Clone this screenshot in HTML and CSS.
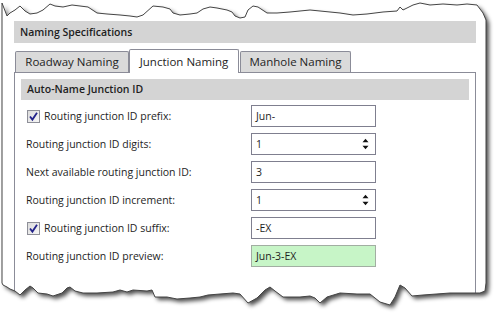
FILE: index.html
```html
<!DOCTYPE html>
<html>
<head>
<meta charset="utf-8">
<link rel="stylesheet" href="styles.css">
</head>
<body>
<div class="page">
  <div class="dialog">
    <div class="section-head">Naming Specifications</div>
    <div class="tabs">
      <div class="tab tab-road">Roadway Naming</div>
      <div class="tab tab-junc">Junction Naming</div>
      <div class="tab tab-man">Manhole Naming</div>
    </div>
    <div class="panel">
      <div class="group-head">Auto-Name Junction ID</div>
      <div class="rows">
        <div class="row">
          <label class="lbl"><span class="cb"><svg viewBox="0 0 13 13" width="13" height="13"><path d="M3 6.5 L5.4 9.6 L10 2.8" class="check"/></svg></span>Routing junction ID prefix:</label>
          <div class="field">Jun-</div>
        </div>
        <div class="row">
          <label class="lbl">Routing junction ID digits:</label>
          <div class="field"><span>1</span><svg class="spin" viewBox="0 0 7 12" width="7" height="12"><path d="M0.5 4.2 L3.5 0.8 L6.5 4.2 Z M0.5 7.8 L6.5 7.8 L3.5 11.2 Z"/></svg></div>
        </div>
        <div class="row">
          <label class="lbl">Next available routing junction ID:</label>
          <div class="field">3</div>
        </div>
        <div class="row">
          <label class="lbl">Routing junction ID increment:</label>
          <div class="field"><span>1</span><svg class="spin" viewBox="0 0 7 12" width="7" height="12"><path d="M0.5 4.2 L3.5 0.8 L6.5 4.2 Z M0.5 7.8 L6.5 7.8 L3.5 11.2 Z"/></svg></div>
        </div>
        <div class="row">
          <label class="lbl"><span class="cb"><svg viewBox="0 0 13 13" width="13" height="13"><path d="M3 6.5 L5.4 9.6 L10 2.8" class="check"/></svg></span>Routing junction ID suffix:</label>
          <div class="field">-EX</div>
        </div>
        <div class="row">
          <label class="lbl">Routing junction ID preview:</label>
          <div class="field preview">Jun-3-EX</div>
        </div>
      </div>
    </div>
  </div>
  <svg class="tear" viewBox="0 0 496 315" width="496" height="315">
    <defs>
      <path id="paper" d="M2,3 L7,16 L10,13 L15,10 L20,6 L25,11 L30,14 L37,13 L43,10 L50,4 L55,6 L63,7 L72,5 L80,6 L88,7 L97,13 L107,14 L120,15 L130,16 L137,17 L143,15 L153,6 L163,7 L170,9 L173,13 L180,15 L190,14 L197,13 L203,9 L210,7 L217,8 L227,10 L232,12 L235,16 L240,18 L245,17 L248,10 L253,6 L258,7 L267,13 L277,13 L290,12 L300,11 L310,10 L320,11 L330,12 L340,13 L353,15 L367,14 L383,12 L397,11 L400,7 L403,10 L413,5 L420,3 L430,5 L443,4 L457,5 L467,4 L477,5 L483,13 L486,20 L486,283 L485,291 L480,293 L450,293 L423,295 L412,296 L405,288 L400,285 L395,297 L390,305 L380,302 L370,294 L357,294 L340,293 L327,297 L320,303 L315,298 L310,296 L300,297 L283,297 L275,291 L270,287 L265,290 L257,298 L248,303 L240,294 L233,293 L220,294 L208,295 L200,297 L190,298 L177,299 L167,297 L155,297 L152,290 L147,291 L133,290 L127,292 L120,290 L113,292 L97,293 L83,293 L75,291 L70,287 L67,288 L62,293 L53,296 L47,294 L38,293 L33,288 L30,286 L25,290 L20,295 L15,291 L10,289 L7,287 L3,285 L2,283 Z"/>
      <filter id="sh" x="-10%" y="-10%" width="120%" height="120%">
        <feOffset dx="3" dy="3"/>
        <feGaussianBlur stdDeviation="2.2"/>
      </filter>
      <mask id="outside" maskUnits="userSpaceOnUse" x="0" y="0" width="496" height="315">
        <rect x="0" y="0" width="496" height="315" fill="#fff"/>
        <use href="#paper" fill="#000"/>
      </mask>
    </defs>
    <rect x="0" y="0" width="496" height="315" fill="#fff" mask="url(#outside)"/>
    <use href="#paper" class="shadow" filter="url(#sh)" mask="url(#outside)"/>
    <use href="#paper" class="edge"/>
  </svg>
</div>
</body>
</html>
```

FILE: styles.css
```css
body {
  margin: 0;
  background: #fff;
}

.page {
  position: relative;
  width: 496px;
  height: 315px;
  overflow: hidden;
  font-family: "Open Sans", "Noto Sans", sans-serif;
  color: #1e1e1e;
}

.dialog {
  margin-left: 14px;
  width: 462px;
  padding-top: 21px;
}

.section-head {
  height: 22px;
  background: #d4d4d4;
  font-size: 10.5px;
  font-weight: 600;
  line-height: 22px;
  padding-left: 6px;
}

.tabs {
  display: flex;
  align-items: flex-end;
  height: 23px;
  margin-top: 6px;
  padding-left: 1px;
  position: relative;
  z-index: 1;
}

.tab {
  box-sizing: border-box;
  height: 21px;
  border: 1px solid #8b8c98;
  border-bottom: none;
  border-radius: 2px 2px 0 0;
  background: #dadada;
  font-size: 11.5px;
  line-height: 20px;
  text-align: center;
  white-space: nowrap;
}

.tab-road {
  width: 114px;
}

.tab-junc {
  width: 110px;
  height: 24px;
  margin-bottom: -1px;
  padding-top: 2px;
  background: #fff;
}

.tab-man {
  width: 111px;
  margin-left: 1px;
}

.panel {
  box-sizing: border-box;
  height: 240px;
  border: 1px solid #8b8c98;
  padding: 6px 6px 0 6px;
  background: #fff;
}

.group-head {
  height: 21px;
  background: #d4d4d4;
  font-size: 10.5px;
  font-weight: 600;
  line-height: 21px;
  padding-left: 6px;
}

.rows {
  display: flex;
  flex-direction: column;
  gap: 6px;
  margin-top: 5px;
}

.row {
  display: flex;
  align-items: center;
  height: 22px;
  font-size: 10.5px;
}

.lbl {
  box-sizing: border-box;
  width: 230px;
  display: flex;
  align-items: center;
  padding-left: 5px;
  white-space: nowrap;
}

.cb {
  box-sizing: border-box;
  width: 13px;
  height: 13px;
  margin-left: 1px;
  margin-right: 4px;
  border: 1px solid #8e8f98;
  background: linear-gradient(135deg, #dcdcdc, #f6f6f6);
  display: flex;
  align-items: center;
  justify-content: center;
}

.cb svg {
  display: block;
  margin: -1px;
}

.check {
  fill: none;
  stroke: #23238a;
  stroke-width: 1.8;
}

.field {
  box-sizing: border-box;
  width: 125px;
  height: 22px;
  border: 1px solid #7f7f8f;
  padding: 0 6px 0 4px;
  display: flex;
  align-items: center;
  justify-content: space-between;
  background: #fff;
}

.preview {
  background: #c7f5c7;
  border-color: #a2aea2;
}

.spin {
  display: block;
  fill: #111;
}

.tear {
  position: absolute;
  left: 0;
  top: 0;
  pointer-events: none;
}

.shadow {
  fill: #000;
  fill-opacity: 0.7;
}

.edge {
  fill: none;
  stroke: #454545;
  stroke-width: 1;
}
```
